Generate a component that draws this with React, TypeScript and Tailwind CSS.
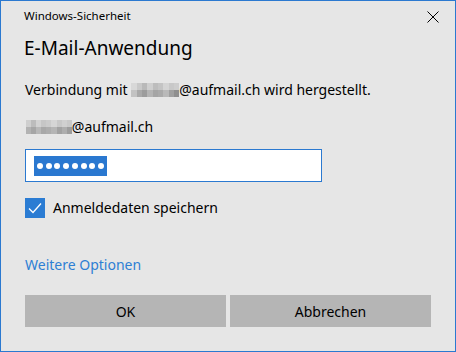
import React from "react";

const Pixels = ({ cols, shades, w }: { cols: number; shades: string[]; w: number }) => (
  <span className="inline-grid align-middle" style={{ gridTemplateColumns: `repeat(${cols}, ${w}px)` }}>
    {shades.map((c, i) => (
      <span key={i} className="block h-[7px]" style={{ background: c, width: w }} />
    ))}
  </span>
);

const shades1 = [
  "#d8d8d8", "#c9c9c9", "#b9b9b9", "#cfcfcf", "#bdbdbd", "#c4c4c4", "#d4d4d4", "#c8c8c8", "#cdcdcd",
  "#c2c2c2", "#a9a9a9", "#9c9c9c", "#b4b4b4", "#a5a5a5", "#aaaaaa", "#b9b9b9", "#a0a0a0", "#8f8f8f",
];
const shades2 = [
  "#cfcfcf", "#bcbcbc", "#d2d2d2", "#c6c6c6", "#cbcbcb", "#d5d5d5", "#c8c8c8", "#d0d0d0", "#c9c9c9",
  "#b3b3b3", "#a6a6a6", "#b8b8b8", "#a8a8a8", "#adadad", "#b5b5b5", "#a2a2a2", "#aeaeae", "#9d9d9d",
];

export default function App() {
  return (
    <div
      className="w-[456px] h-[352px] bg-[#e6e6e6] border border-[#2b79d0] flex flex-col text-black"
      style={{ fontFamily: '"Noto Sans", "Open Sans", sans-serif' }}
    >
      <div className="flex items-start justify-between pl-[23px] pr-[16px] pt-[7px]">
        <span className="text-[11.5px] leading-[16px]">Windows-Sicherheit</span>
        <svg width="12" height="12" viewBox="0 0 12 12" className="mt-[3px]">
          <path d="M0.5 0.5 L11.5 11.5 M11.5 0.5 L0.5 11.5" stroke="#000" strokeWidth="1" />
        </svg>
      </div>
      <div className="pl-[23px] mt-[10px] text-[19px] leading-[28px]">E-Mail-Anwendung</div>
      <div className="pl-[24px] mt-[18px] text-[14px] leading-[20px] flex items-center">
        <span>Verbindung mit&nbsp;</span>
        <Pixels cols={9} shades={shades1} w={5.33} />
        <span>@aufmail.ch wird hergestellt.</span>
      </div>
      <div className="pl-[25px] mt-[17px] text-[14px] leading-[20px] flex items-center">
        <Pixels cols={9} shades={shades2} w={5.1} />
        <span>@aufmail.ch</span>
      </div>
      <div className="ml-[24px] mt-[12px] w-[297px] h-[33px] bg-white border border-[#2b79d0] flex items-center pl-[8px]">
        <div className="h-[20px] w-[73px] bg-[#2a78d0] flex items-center justify-center gap-[2.8px] mt-[1px]">
          {Array.from({ length: 8 }).map((_, i) => (
            <span key={i} className="block w-[6px] h-[6px] rounded-full bg-white" />
          ))}
        </div>
      </div>
      <div className="ml-[24px] mt-[16px] flex items-center gap-[8px]">
        <div className="w-[20px] h-[20px] bg-[#2b7cd3] flex items-center justify-center">
          <svg width="14" height="12" viewBox="0 0 14 12">
            <path d="M1 6.5 L5 10.5 L13 1.5" stroke="#fff" strokeWidth="1.3" fill="none" />
          </svg>
        </div>
        <span className="text-[14px] leading-[20px]">Anmeldedaten speichern</span>
      </div>
      <div className="pl-[24px] mt-[37px] text-[14px] leading-[20px] text-[#2e7fd4]">Weitere Optionen</div>
      <div className="ml-[24px] mt-[20px] flex gap-[4px]">
        <div className="w-[201px] h-[32px] bg-[#b5b5b5] flex items-center justify-center text-[14px]">OK</div>
        <div className="w-[201px] h-[32px] bg-[#b5b5b5] flex items-center justify-center text-[14px]">Abbrechen</div>
      </div>
    </div>
  );
}
